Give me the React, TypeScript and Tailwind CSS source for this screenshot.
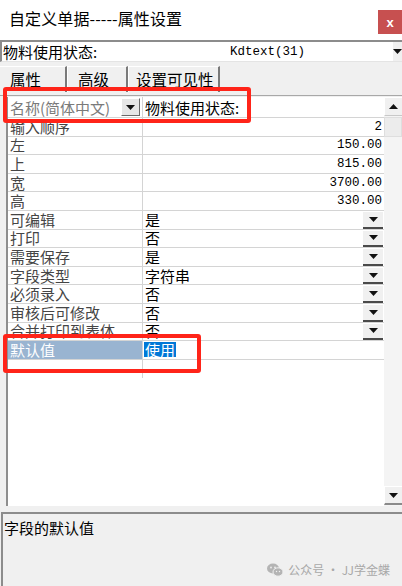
import * as React from "react";

interface Row {
  k: string;
  v: string;
  num?: boolean;
  dd?: boolean;
  sel?: boolean;
}

const rows: Row[] = [
  { k: "输入顺序", v: "2", num: true },
  { k: "左", v: "150.00", num: true },
  { k: "上", v: "815.00", num: true },
  { k: "宽", v: "3700.00", num: true },
  { k: "高", v: "330.00", num: true },
  { k: "可编辑", v: "是", dd: true },
  { k: "打印", v: "否", dd: true },
  { k: "需要保存", v: "是", dd: true },
  { k: "字段类型", v: "字符串", dd: true },
  { k: "必须录入", v: "否", dd: true },
  { k: "审核后可修改", v: "否", dd: true },
  { k: "合并打印到表体", v: "否", dd: true },
  { k: "默认值", v: "使用", sel: true },
  { k: "", v: "" },
];

const Tri: React.FC<{ up?: boolean }> = ({ up }) => (
  <svg width="9" height="5" viewBox="0 0 9 5">
    {up ? <polygon points="0,5 9,5 4.5,0" fill="#111" /> : <polygon points="0,0 9,0 4.5,5" fill="#111" />}
  </svg>
);

const DropBtn: React.FC = () => (
  <div className="w-[20px] h-full flex items-center justify-center bg-[#f0f0f0] border-t border-t-white border-b-2 border-b-[#4a4a4a]">
    <Tri />
  </div>
);

const WeChat: React.FC = () => (
  <svg width="16" height="14" viewBox="0 0 16 14">
    <ellipse cx="6" cy="5.5" rx="6" ry="5" fill="#b4b4b4" />
    <ellipse cx="11" cy="9" rx="5" ry="4.2" fill="#b4b4b4" stroke="#f0f0f0" strokeWidth="1" />
    <circle cx="4" cy="4.5" r="0.9" fill="#f0f0f0" />
    <circle cx="8" cy="4.5" r="0.9" fill="#f0f0f0" />
    <circle cx="9.5" cy="8.5" r="0.7" fill="#f0f0f0" />
    <circle cx="12.5" cy="8.5" r="0.7" fill="#f0f0f0" />
  </svg>
);

export default function App() {
  return (
    <div className="relative w-[402px] h-[586px] overflow-hidden bg-[#f0f0f0] flex flex-col font-['Noto_Sans_CJK_SC',sans-serif] text-[15px] leading-none text-black">
      {/* title bar */}
      <div className="h-[40px] bg-white flex items-start justify-between pl-[9px]">
        <span className="mt-[10px] text-[16px] tracking-[0.1px]">自定义单据-----属性设置</span>
        <div className="mt-[10px] w-[24px] h-[24px] bg-[#c75050] flex items-center justify-center text-white text-[13px] font-bold font-['Liberation_Sans',sans-serif]">
          x
        </div>
      </div>

      {/* combo */}
      <div className="h-[22px] bg-white border-t-2 border-l-2 border-[#8c8c8c] border-b border-b-[#e4e4e4] flex items-center">
        <span className="pl-[1px] w-[228px] leading-[18px]">物料使用状态:</span>
        <span className="flex-1 font-['Liberation_Mono',monospace] text-[12.5px] leading-[18px]">Kdtext(31)</span>
        <div className="w-[10px] h-full bg-[#f0f0f0] border-l border-white flex items-center justify-center overflow-hidden">
          <Tri />
        </div>
      </div>

      <div className="h-[4px]" />

      {/* tabs */}
      <div className="h-[26px] flex">
        <div className="w-[67px] border-t border-white border-r-2 border-r-[#7a7a7a] flex items-center pl-[10px] text-[15.5px]">属性</div>
        <div className="w-[61px] border-t border-l border-white border-r-2 border-r-[#7a7a7a] flex items-center pl-[10px] text-[15.5px]">高级</div>
        <div className="w-[92px] border-t border-l border-white border-r-2 border-r-[#7a7a7a] flex items-center pl-[7px] text-[15.5px]">设置可见性</div>
      </div>

      <div className="h-[3px]" />

      {/* grid */}
      <div className="h-[411px] flex border-t border-[#a8a8a8] pt-[1px] pl-[6px]">
        <div className="flex-1 flex flex-col bg-white border-l-2 border-[#8e8e8e]">
          <div className="h-[21px] flex border-b border-[#d4d4d4]">
            <div className="w-[135px] flex items-center border-r border-[#d4d4d4] pl-[2px] text-[#7a7a7a]">
              <span className="leading-[17px]">名称(简体中文)</span>
              <div className="ml-auto mr-[2px] w-[19px] h-[18px] flex items-center justify-center bg-[#e6e6e6] border border-t-white border-l-white border-b-[#6a6a6a] border-r-[#6a6a6a]">
                <Tri />
              </div>
            </div>
            <div className="flex-1 flex items-center pl-[2px] leading-[17px]">物料使用状态:</div>
          </div>
          {rows.map((r, i) => (
            <div key={i} className={`h-[18.6px] flex leading-[16px] ${i < rows.length - 1 ? "border-b border-[#d4d4d4]" : ""}`}>
              <div
                className={`w-[135px] flex items-center pl-[2px] border-r border-[#d4d4d4] ${
                  r.sel ? "bg-[#99b4d1] text-white" : "text-[#454545]"
                }`}
              >
                {r.k}
              </div>
              <div className="flex-1 flex items-center">
                {r.num ? (
                  <span className="ml-auto pr-[2px] font-['Liberation_Mono',monospace] text-[12.5px]">{r.v}</span>
                ) : r.sel ? (
                  <span className="ml-[1px] px-[1px] h-[15px] flex items-center bg-[#0078d7] text-white">{r.v}</span>
                ) : (
                  <>
                    <span className="pl-[2px]">{r.v}</span>
                    {r.dd && (
                      <div className="ml-auto mr-[1px] h-full">
                        <DropBtn />
                      </div>
                    )}
                  </>
                )}
              </div>
            </div>
          ))}
          <div className="flex-1" />
        </div>

        {/* scrollbar */}
        <div className="w-[18px] flex flex-col bg-[#f4f4f4]">
          <div className="h-[19px] flex items-center justify-center bg-[#f0f0f0] border-t border-l border-white border-b border-b-[#c8c8c8]">
            <Tri up />
          </div>
          <div className="h-[20px] mt-[1px] bg-[#ececec] border border-[#dedede]" />
          <div className="flex-1" />
          <div className="h-[19px] mb-[1px] flex items-center justify-center bg-[#f0f0f0] border-t border-l border-white border-b-2 border-b-[#8a8a8a]">
            <Tri />
          </div>
        </div>
      </div>

      <div className="h-[6px]" />

      {/* description panel */}
      <div className="flex-1 flex flex-col border-t-2 border-[#8c8c8c] border-l-2 ml-[1px] pt-[6px]">
        <span className="pl-[1px] text-[15px]">字段的默认值</span>
        <div className="mt-auto mb-[9px] mr-[12px] flex items-center justify-end gap-[5px] text-[12px] text-[#a8a8a8]">
          <WeChat />
          <span>公众号 · JJ学金蝶</span>
        </div>
      </div>

      {/* annotation boxes */}
      <div className="absolute left-[3px] top-[87px] w-[248px] h-[36px] border-4 border-[#ff2419] rounded-[3px]" />
      <div className="absolute left-[3px] top-[334px] w-[198px] h-[39px] border-4 border-[#ff2419] rounded-[3px]" />
    </div>
  );
}
